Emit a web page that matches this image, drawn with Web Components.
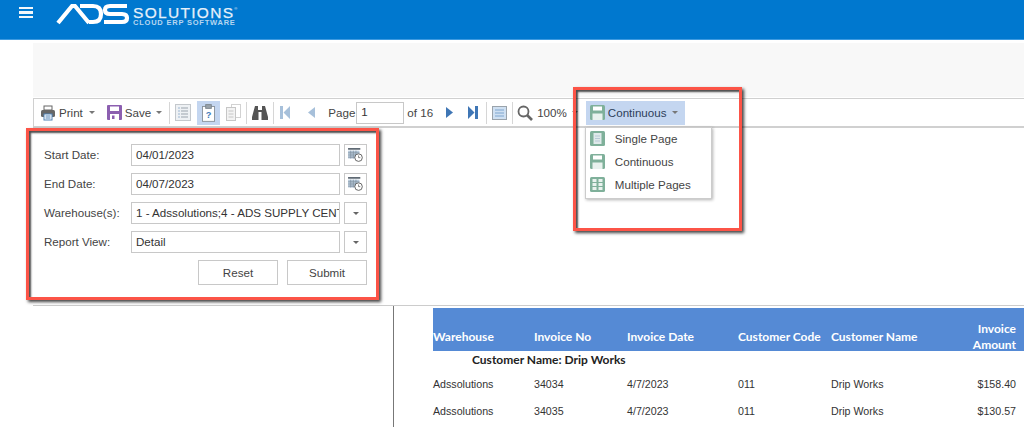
<!DOCTYPE html>
<html lang="en">
<head>
<meta charset="utf-8">
<title>Report viewer</title>
<style>
html, body { margin: 0; height: 427px; overflow: hidden; background: #fff; }
body { position: relative; font-family: "Liberation Sans", Arial, sans-serif; color: #444; }
</style>
</head>
<body>
<app-header></app-header>
<report-viewer>
  <report-toolbar></report-toolbar>
  <param-panel></param-panel>
  <report-table></report-table>
</report-viewer>
<callout-box style="left:26px;top:128px;width:353px;height:172px"></callout-box>
<callout-box style="left:573px;top:87px;width:169px;height:144px"></callout-box>

<script>
const ICONS = {
  print: `<svg width="16" height="16" viewBox="0 0 16 16"><rect x="4" y="1" width="8" height="4" fill="#fff" stroke="#666"/><rect x="1" y="5" width="14" height="7" rx="1.5" fill="#666"/><rect x="4" y="9" width="8" height="6" fill="#fff" stroke="#4f81b5"/><path d="M5.5 11h5M5.5 13h5" stroke="#4f81b5"/></svg>`,
  save: `<svg width="15" height="15" viewBox="0 0 15 15"><rect width="15" height="15" rx="1" fill="#8c5fb0"/><rect x="3" y="1.5" width="9" height="4.5" fill="#fff"/><rect x="3" y="9" width="9" height="6" fill="#fff"/><rect x="5" y="10.5" width="2.5" height="3.5" fill="#8c5fb0"/></svg>`,
  outline: `<svg width="16" height="17" viewBox="0 0 16 17"><rect x=".5" y=".5" width="15" height="16" fill="#eef1f4" stroke="#c4c8cc"/><path d="M3 4h2M3 7h2M3 10h2M3 13h2" stroke="#9cb6d2"/><path d="M6 4h7M6 7h7M6 10h7M6 13h7" stroke="#9ba4ad"/></svg>`,
  help: `<svg width="13" height="18" viewBox="0 0 14 19"><rect x=".5" y="2.5" width="13" height="16" fill="#fff" stroke="#8a939b"/><rect x="4" y=".5" width="6" height="4" fill="#9aa3ab" stroke="#7a848c"/><text x="7" y="15" font-family="Liberation Sans, sans-serif" font-size="10" font-weight="700" text-anchor="middle" fill="#3f79b8">?</text></svg>`,
  copy: `<svg width="15" height="17" viewBox="0 0 15 17"><rect x="5.5" y=".5" width="9" height="13" fill="#fff" stroke="#d2d2d2"/><rect x=".5" y="3.5" width="9" height="13" fill="#f3f3f3" stroke="#c6c6c6"/><path d="M2.500 7h5M2.500 10h5M2.500 13h5" stroke="#c6c6c6"/></svg>`,
  find: `<svg width="16" height="15" viewBox="0 0 16 15"><path d="M3 1h3v4h4V1h3l3 11v3H9.500V7h-3v8H0v-3z" fill="#555"/></svg>`,
  first: `<svg width="10" height="13" viewBox="0 0 10 13"><path d="M0 0h3v13H0zM10 0v13L3.500 6.500z" fill="#a7c0da"/></svg>`,
  prev: `<svg width="7" height="11" viewBox="0 0 7 11"><path d="M7 0v11L0 5.500z" fill="#a7c0da"/></svg>`,
  next: `<svg width="7" height="11" viewBox="0 0 7 11"><path d="M0 0v11l7-5.500z" fill="#3f76b5"/></svg>`,
  last: `<svg width="10" height="13" viewBox="0 0 10 13"><path d="M0 0v13l6.500-6.500zM7 0h3v13H7z" fill="#3f76b5"/></svg>`,
  page: `<svg width="15" height="14" viewBox="0 0 15 14"><rect x=".5" y=".5" width="14" height="13" fill="#cfe0f2" stroke="#9aa3ab"/><path d="M3 4h9M3 7h9M3 10h9" stroke="#7ea6cf"/></svg>`,
  zoom: `<svg width="16" height="16" viewBox="0 0 16 16"><circle cx="6.500" cy="6.500" r="5" fill="#fff" stroke="#666" stroke-width="1.800"/><path d="M10 10l5 5" stroke="#666" stroke-width="2.600"/></svg>`,
  floppy: `<svg width="15" height="15" viewBox="0 0 15 15"><rect width="15" height="15" rx="1.500" fill="#7fb09a"/><rect x="3" y="1.500" width="9" height="4" fill="#fff"/><rect x="2.500" y="8.500" width="10" height="6.500" fill="#e9f2ee"/></svg>`,
  single: `<svg width="15" height="15" viewBox="0 0 15 15"><rect width="15" height="15" rx="1.500" fill="#7fb09a"/><rect x="3.500" y="2" width="8" height="11" fill="#dfe9ea"/><path d="M5 5h5M5 7.500h5M5 10h5" stroke="#b7c9d6"/></svg>`,
  multi: `<svg width="15" height="15" viewBox="0 0 15 15"><rect width="15" height="15" rx="1.500" fill="#7fb09a"/><path d="M2.500 2h4v3h-4zM8.500 2h4v3h-4zM2.500 6h4v3h-4zM8.500 6h4v3h-4zM2.500 10h4v3h-4zM8.500 10h4v3h-4z" fill="#e9f2ee"/></svg>`,
  calendar: `<svg width="15" height="14" viewBox="0 0 17 16"><rect y="0" width="14" height="2" fill="#5f6a74"/><path d="M0 3h13v9H0z" fill="#b9cbdc"/><path d="M0 5.500h13M0 8h13M0 10.500h13M3 3v9M6 3v9M9 3v9" stroke="#7d8d9c" stroke-width=".8"/><circle cx="12" cy="11" r="4.300" fill="#fff" stroke="#555"/><path d="M12 8.500V11h2" fill="none" stroke="#555" stroke-width=".8"/></svg>`
};

class AppHeader extends HTMLElement {
  constructor() {
    super();
    this.attachShadow({mode: 'open'}).innerHTML = `
    <style>
      :host { display: flex; align-items: flex-start; height: 39px; background: #0078cf; border-bottom: 1px solid #3d9ae0; }
      .burger { width: 14px; margin: 7px 23px 0 19px; display: flex; flex-direction: column; gap: 2px; }
      .burger i { display: block; height: 2.400px; background: #f2f7fb; }
      svg { display: block; flex: none; }
      .brand { margin: 7px 0 0 2px; color: #e6f0fa; font-family: "Liberation Sans", Arial, sans-serif; width: 110px; }
      .name { font-size: 15.500px; line-height: 12px; letter-spacing: 1.300px; white-space: nowrap; -webkit-text-stroke: .25px #e6f0fa; }
      .name sup { font-size: 4px; line-height: 0; vertical-align: 8px; letter-spacing: 0; -webkit-text-stroke: 0; }
      .tag { font-size: 7.500px; line-height: 8px; font-weight: 700; letter-spacing: .78px; white-space: nowrap; color: #b6d6f0; }
    </style>
    <div class="burger"><i></i><i></i><i></i></div>
    <svg width="75" height="28" viewBox="56 0 75 28" fill="none" stroke="#fff" stroke-width="4.200" role="img" aria-label="ADS logo">
      <path d="M58 23 L72 6 H75 L89 23"/>
      <path d="M80 6 H93 Q101 6 101 14 Q101 22 93 22 H89"/>
      <path d="M127 6 H110 Q105 6 105 10 Q105 14 110 14 H122 Q127 14 127 18 Q127 22 122 22 H104"/>
    </svg>
    <div class="brand"><div class="name">SOLUTIONS<sup>®</sup></div><div class="tag">CLOUD ERP SOFTWARE</div></div>`;
  }
}
customElements.define('app-header', AppHeader);

class ReportViewer extends HTMLElement {
  constructor() {
    super();
    this.attachShadow({mode: 'open'}).innerHTML = `
    <style>
      :host { display: block; margin: 3px 0 0 33px; }
      .band { height: 54px; margin-bottom: 1px; background: #f8f8f8; }
    </style>
    <div class="band"></div>
    <slot></slot>`;
  }
}
customElements.define('report-viewer', ReportViewer);

class ViewMenu extends HTMLElement {
  constructor() {
    super();
    this.attachShadow({mode: 'open'}).innerHTML = `
    <style>
      :host { display: block; position: relative; margin-left: 8px; font-size: 11.600px; color: #444; }
      .btn { display: flex; align-items: center; height: 24px; width: 99px; box-sizing: border-box; padding-left: 4px; background: #c4d6f0; color: #2d3e5a; }
      .btn span { margin-left: 3px; }
      .caret { margin-left: 6px; width: 0; height: 0; border: 3px solid transparent; border-top-color: #777; border-bottom: 0; }
      svg { display: block; flex: none; }
      ul { position: absolute; left: -1px; top: 26px; width: 127px; height: 72px; box-sizing: border-box; margin: 0; padding: 0; list-style: none; background: #fff; border: 1px solid #ccc; box-shadow: 1px 1px 3px rgba(0,0,0,.3); }
      li { display: flex; align-items: center; height: 23px; padding-left: 4px; }
      li:first-child { margin-top: -1px; }
      li span { margin-left: 10px; white-space: nowrap; }
    </style>
    <div class="btn">${ICONS.floppy}<span>Continuous</span><i class="caret"></i></div>
    <ul>
      <li>${ICONS.single}<span>Single Page</span></li>
      <li>${ICONS.floppy}<span>Continuous</span></li>
      <li>${ICONS.multi}<span>Multiple Pages</span></li>
    </ul>`;
  }
}
customElements.define('view-menu', ViewMenu);

class ReportToolbar extends HTMLElement {
  constructor() {
    super();
    this.attachShadow({mode: 'open'}).innerHTML = `
    <style>
      :host { display: flex; align-items: center; height: 30px; box-sizing: border-box; padding-left: 6px; border: 1px solid #d0d0d0; border-right: 0; border-bottom: 2px solid #d0d0d0; font-size: 11.600px; color: #444; }
      svg { display: block; flex: none; }
      span { white-space: nowrap; }
      .caret { width: 0; height: 0; border: 3px solid transparent; border-top-color: #777; border-bottom: 0; flex: none; }
      .sep { width: 1px; height: 22px; background: #d6d6d6; flex: none; }
      .active { display: flex; align-items: center; justify-content: center; width: 23px; height: 24px; background: #c4d6f0; flex: none; }
      .page { width: 48px; height: 22px; box-sizing: border-box; border: 1px solid #c8c8c8; padding: 2px 0 0 4px; color: #333; flex: none; }
    </style>
    ${ICONS.print}<span style="margin-left:3px">Print</span><i class="caret" style="margin-left:6px"></i>
    <div style="margin-left:12px">${ICONS.save}</div><span style="margin-left:3px">Save</span><i class="caret" style="margin-left:5px"></i>
    <i class="sep" style="margin-left:7px"></i>
    <div style="margin-left:5px">${ICONS.outline}</div>
    <div class="active" style="margin-left:6px">${ICONS.help}</div>
    <div style="margin-left:6px">${ICONS.copy}</div>
    <i class="sep" style="margin-left:5px"></i>
    <div style="margin-left:5px">${ICONS.find}</div>
    <i class="sep" style="margin-left:5px"></i>
    <div style="margin-left:6px">${ICONS.first}</div>
    <div style="margin-left:18px">${ICONS.prev}</div>
    <span style="margin-left:13px">Page</span>
    <div class="page" style="margin-left:1px">1</div>
    <span style="margin-left:3px">of 16</span>
    <div style="margin-left:13px">${ICONS.next}</div>
    <div style="margin-left:15px">${ICONS.last}</div>
    <i class="sep" style="margin-left:8px"></i>
    <div style="margin-left:5px">${ICONS.page}</div>
    <i class="sep" style="margin-left:5px"></i>
    <div style="margin-left:4px">${ICONS.zoom}</div>
    <span style="margin-left:4px">100%</span><i class="caret" style="margin-left:5px"></i>
    <view-menu></view-menu>`;
  }
}
customElements.define('report-toolbar', ReportToolbar);

class ParamRow extends HTMLElement {
  connectedCallback() {
    if (this.shadowRoot) return;
    const side = this.getAttribute('kind') === 'date' ? ICONS.calendar : '<i class="caret"></i>';
    this.attachShadow({mode: 'open'}).innerHTML = `
    <style>
      :host { display: grid; grid-template-columns: 83px 209px 23px; column-gap: 4px; align-items: center; height: 22px; font-size: 11.600px; color: #444; }
      .label { padding-bottom: 2px; }
      .field, .side { height: 22px; box-sizing: border-box; border: 1px solid #c8c8c8; display: flex; align-items: center; }
      .field { padding: 0 0 2px 4px; overflow: hidden; white-space: nowrap; color: #333; }
      .side { justify-content: center; }
      .caret { width: 0; height: 0; border: 3px solid transparent; border-top-color: #666; border-bottom: 0; }
    </style>
    <div class="label">${this.getAttribute('label')}</div>
    <div class="field">${this.getAttribute('value')}</div>
    <div class="side">${side}</div>`;
  }
}
customElements.define('param-row', ParamRow);

class ParamPanel extends HTMLElement {
  constructor() {
    super();
    this.attachShadow({mode: 'open'}).innerHTML = `
    <style>
      :host { display: block; height: 178px; box-sizing: border-box; padding: 16px 0 0 11px; border-bottom: 1px solid #ccc; font-size: 11.600px; color: #444; }
      .rows { display: flex; flex-direction: column; gap: 7px; width: 323px; }
      .actions { display: flex; justify-content: flex-end; gap: 9px; width: 323px; margin-top: 7px; }
      .actions div { width: 80px; height: 25px; box-sizing: border-box; border: 1px solid #c8c8c8; display: flex; align-items: center; justify-content: center; }
    </style>
    <div class="rows">
      <param-row label="Start Date:" value="04/01/2023" kind="date"></param-row>
      <param-row label="End Date:" value="04/07/2023" kind="date"></param-row>
      <param-row label="Warehouse(s):" value="1 - Adssolutions;4 - ADS SUPPLY CENTER" kind="list"></param-row>
      <param-row label="Report View:" value="Detail" kind="list"></param-row>
    </div>
    <div class="actions"><div>Reset</div><div>Submit</div></div>`;
  }
}
customElements.define('param-panel', ParamPanel);

class ReportTable extends HTMLElement {
  constructor() {
    super();
    const cols = 'grid-template-columns: 101px 93px 111px 93px 1fr 60px;';
    const row = (cells) => `<div class="row" style="${cols}">${cells.map(c => `<div>${c}</div>`).join('')}</div>`;
    this.attachShadow({mode: 'open'}).innerHTML = `
    <style>
      :host { display: block; height: 121px; margin-left: 360px; padding-left: 39px; border-left: 1px solid #777; overflow: hidden; }
      .head { display: grid; ${cols} align-items: center; height: 43px; margin-top: 2px; padding-right: 8px; background: #558ad5; color: #fff; font: 700 12px Lato, "Open Sans", sans-serif; }
      .head div { padding-top: 12px; white-space: nowrap; }
      .head .amt { text-align: right; padding-top: 0; line-height: 16px; margin-top: 13px; }
      .group { height: 18px; margin-bottom: 1px; padding-left: 39px; font: 700 12px/18px Lato, "Open Sans", sans-serif; color: #222; }
      .row { display: grid; align-items: center; height: 27px; padding-right: 8px; font: 10.670px "Liberation Sans", Arial, sans-serif; color: #333; }
      .row div:last-child { text-align: right; }
    </style>
    <div class="head"><div>Warehouse</div><div>Invoice No</div><div>Invoice Date</div><div>Customer Code</div><div>Customer Name</div><div class="amt">Invoice<br>Amount</div></div>
    <div class="group">Customer Name: Drip Works</div>
    ${row(['Adssolutions', '34034', '4/7/2023', '011', 'Drip Works', '$158.40'])}
    ${row(['Adssolutions', '34035', '4/7/2023', '011', 'Drip Works', '$130.57'])}`;
  }
}
customElements.define('report-table', ReportTable);

class CalloutBox extends HTMLElement {
  constructor() {
    super();
    this.attachShadow({mode: 'open'}).innerHTML = `
    <style>
      :host { display: block; position: absolute; box-sizing: border-box; border: 3px solid #fc5447; pointer-events: none; box-shadow: 2px 2px 3px rgba(0,0,0,.75), inset 2px 2px 2px rgba(0,0,0,.7); }
    </style>`;
  }
}
customElements.define('callout-box', CalloutBox);
</script>
</body>
</html>
